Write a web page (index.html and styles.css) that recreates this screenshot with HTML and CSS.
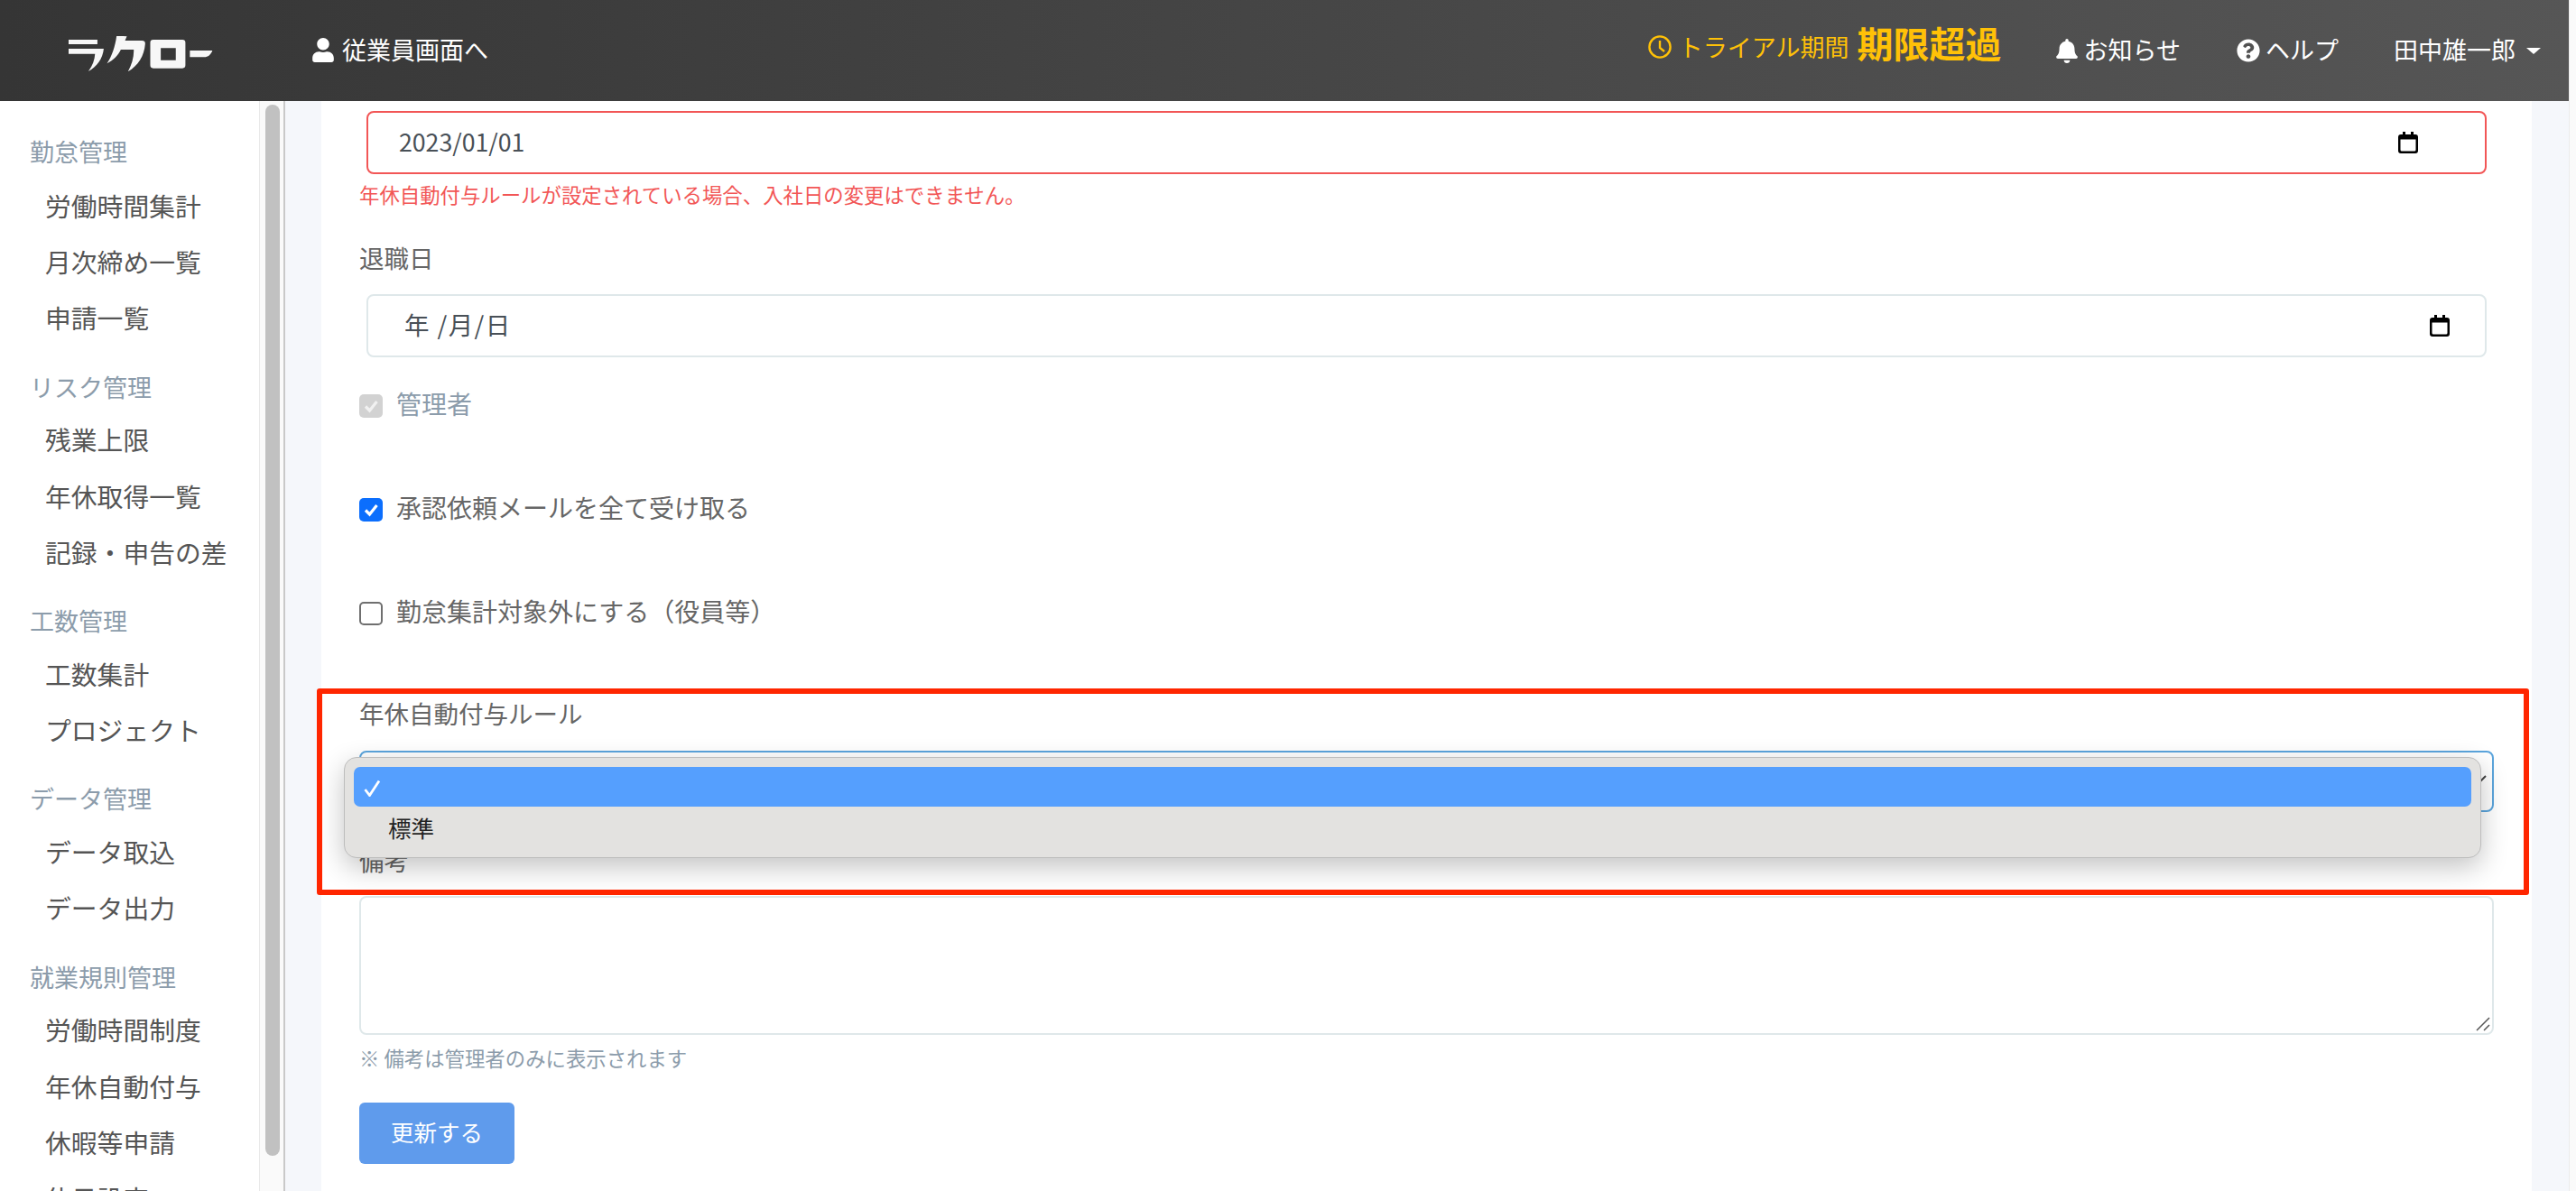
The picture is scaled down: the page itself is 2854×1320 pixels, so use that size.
FILE: index.html
```html
<!DOCTYPE html>
<html lang="ja">
<head>
<meta charset="utf-8">
<title>ラクロー</title>
<link rel="stylesheet" href="styles.css">
</head>
<body>
<div class="app">
  <header class="topbar">
    <svg class="logo" viewBox="45 30 490 120" role="img" aria-label="ラクロー">
      <path fill="#f7f7f7" d="M48 42H144V57H48ZM48 72H165C162 105 142 132 114 147C128 128 135 108 136 89H48Z"/>
      <path fill="#f7f7f7" d="M208 28L242 31L236 45H292Q304 45 303 56C300 95 280 128 246 148C258 125 266 100 265 75H222C212 95 198 110 176 121C192 98 204 62 208 28Z"/>
      <path fill="#f7f7f7" fill-rule="evenodd" d="M330 42H427Q437 42 437 52V127Q437 137 427 137H330Q320 137 320 127V52Q320 42 330 42ZM355 70V110H405V70Z"/>
      <path fill="#f7f7f7" d="M452 78H527C522 92 512 100 500 100H452Z"/>
    </svg>
    <a class="nav-link employee-link">
      <svg class="icon icon-user" viewBox="0 0 448 512"><path d="M224 256c70.7 0 128-57.3 128-128S294.7 0 224 0 96 57.3 96 128s57.3 128 128 128zm89.6 32h-16.7c-22.2 10.2-46.9 16-72.9 16s-50.6-5.8-72.9-16h-16.7C60.2 288 0 348.2 0 422.4V464c0 26.5 21.5 48 48 48h352c26.5 0 48-21.5 48-48v-41.6c0-74.2-60.2-134.4-134.4-134.4z"/></svg>
      <span>従業員画面へ</span>
    </a>
    <div class="topbar-right">
      <div class="trial">
        <svg class="icon-clock" viewBox="0 0 26 26"><circle cx="13" cy="13" r="11.6" fill="none" stroke="currentColor" stroke-width="2.4"/><polyline points="13,6 13,14 18,18" fill="none" stroke="currentColor" stroke-width="2.4"/></svg>
        <span>トライアル期間</span>
        <strong class="trial-status">期限超過</strong>
      </div>
      <a class="nav-link notice-link">
        <svg class="icon icon-bell" viewBox="0 0 448 512"><path d="M224 512c35.32 0 63.97-28.65 63.97-64H160.03c0 35.35 28.65 64 63.97 64zm215.39-149.71c-19.32-20.76-55.47-51.99-55.47-154.29 0-77.7-54.48-139.9-127.94-155.16V32c0-17.67-14.32-32-31.98-32s-31.98 14.33-31.98 32v20.84C118.56 68.1 64.08 130.3 64.08 208c0 102.3-36.15 133.53-55.47 154.29-6 6.45-8.66 14.16-8.61 21.71.11 16.4 12.98 32 32.1 32h383.8c19.12 0 32-15.6 32.1-32 .05-7.55-2.61-15.27-8.61-21.71z"/></svg>
        <span>お知らせ</span>
      </a>
      <a class="nav-link help-link">
        <svg class="icon icon-help" viewBox="0 0 512 512"><path d="M504 256c0 136.997-111.043 248-248 248S8 392.997 8 256C8 119.083 119.043 8 256 8s248 111.083 248 248zM262.655 90c-54.497 0-89.255 22.957-116.549 63.758-3.536 5.286-2.353 12.415 2.715 16.258l34.699 26.31c5.205 3.947 12.621 3.008 16.665-2.122 17.864-22.658 30.113-35.797 57.303-35.797 20.429 0 45.698 13.148 45.698 32.958 0 14.976-12.363 22.667-32.534 33.976C247.128 238.528 216 254.941 216 296v4c0 6.627 5.373 12 12 12h56c6.627 0 12-5.373 12-12v-1.333c0-28.462 83.186-29.647 83.186-106.667 0-58.002-60.165-102-116.531-102zM256 338c-25.365 0-46 20.635-46 46 0 25.364 20.635 46 46 46s46-20.636 46-46c0-25.365-20.635-46-46-46z"/></svg>
        <span>ヘルプ</span>
      </a>
      <a class="nav-link user-menu">
        <span>田中雄一郎</span>
        <i class="caret"></i>
      </a>
    </div>
  </header>

  <div class="workspace">
    <nav class="sidebar">
      <h2 class="side-heading">勤怠管理</h2>
      <a class="side-item">労働時間集計</a>
      <a class="side-item">月次締め一覧</a>
      <a class="side-item">申請一覧</a>
      <h2 class="side-heading">リスク管理</h2>
      <a class="side-item">残業上限</a>
      <a class="side-item">年休取得一覧</a>
      <a class="side-item">記録・申告の差</a>
      <h2 class="side-heading">工数管理</h2>
      <a class="side-item">工数集計</a>
      <a class="side-item">プロジェクト</a>
      <h2 class="side-heading">データ管理</h2>
      <a class="side-item">データ取込</a>
      <a class="side-item">データ出力</a>
      <h2 class="side-heading">就業規則管理</h2>
      <a class="side-item">労働時間制度</a>
      <a class="side-item">年休自動付与</a>
      <a class="side-item">休暇等申請</a>
      <a class="side-item">休日設定</a>
    </nav>
    <div class="side-scrollbar"><div class="side-thumb"></div></div>

    <main class="content">
      <form class="card">
        <div class="date-input date-error">
          <span class="date-value">2023/01/01</span>
          <svg class="calendar" viewBox="0 0 22 24"><path d="M5 0h3v3h6V0h3v3h2a3 3 0 0 1 3 3v15a3 3 0 0 1-3 3H3a3 3 0 0 1-3-3V6a3 3 0 0 1 3-3h2ZM2.500 8.500V20a1.500 1.500 0 0 0 1.500 1.500h14a1.500 1.500 0 0 0 1.500-1.500V8.500Z" fill-rule="evenodd"/></svg>
        </div>
        <p class="error-text">年休自動付与ルールが設定されている場合、入社日の変更はできません。</p>

        <label class="field-label retire-label">退職日</label>
        <div class="date-input date-empty">
          <span class="date-placeholder">年 /月/日</span>
          <svg class="calendar" viewBox="0 0 22 24"><path d="M5 0h3v3h6V0h3v3h2a3 3 0 0 1 3 3v15a3 3 0 0 1-3 3H3a3 3 0 0 1-3-3V6a3 3 0 0 1 3-3h2ZM2.500 8.500V20a1.500 1.500 0 0 0 1.500 1.500h14a1.500 1.500 0 0 0 1.500-1.500V8.500Z" fill-rule="evenodd"/></svg>
        </div>

        <div class="check-row check-disabled">
          <span class="check check-grey"><svg viewBox="0 0 26 26"><polyline points="7,13.500 11.500,18 19.500,8" fill="none" stroke="#f1f1f1" stroke-width="3.200"/></svg></span>
          <span>管理者</span>
        </div>
        <div class="check-row">
          <span class="check check-on"><svg viewBox="0 0 26 26"><polyline points="7,13.500 11.500,18 19.500,8" fill="none" stroke="#fff" stroke-width="3.200"/></svg></span>
          <span>承認依頼メールを全て受け取る</span>
        </div>
        <div class="check-row">
          <span class="check check-off"></span>
          <span>勤怠集計対象外にする（役員等）</span>
        </div>

        <label class="field-label rule-label">年休自動付与ルール</label>
        <div class="select-box">
          <svg class="chevron" viewBox="0 0 24 14"><polyline points="1,1 12,12 23,1" fill="none" stroke="#444" stroke-width="2"/></svg>
          <div class="select-popup">
            <div class="select-option option-active">
              <svg class="option-check" viewBox="0 0 19 19"><polyline points="1.500,11 6.500,17.500 17,1.500" fill="none" stroke="#fff" stroke-width="2.800"/></svg>
            </div>
            <div class="select-option">標準</div>
          </div>
        </div>

        <label class="field-label memo-label">備考</label>
        <div class="memo-box">
          <svg class="resize-grip" viewBox="0 0 16 16"><path d="M1 15L15 1M9 15L15 9" stroke="#555" stroke-width="1.500" fill="none"/></svg>
        </div>
        <p class="note-text">※ 備考は管理者のみに表示されます</p>
        <button type="button" class="submit">更新する</button>

        <div class="annotation"></div>
      </form>
    </main>
  </div>
</div>
</body>
</html>
```
FILE: styles.css
```css
* { box-sizing: border-box; }
html, body { margin: 0; height: 100%; overflow: hidden; }
body {
  background: #fafafa;
  font-family: "Noto Sans CJK JP", "Noto Sans", sans-serif;
  color: #666;
}
.app { width: 2847px; height: 1320px; display: flex; flex-direction: column; border-right: 1px solid #ececec; }

/* top bar */
.topbar {
  flex: none;
  height: 112px;
  display: flex;
  align-items: center;
  padding: 0 31px 0 75px;
  background: linear-gradient(90deg, #353535, #565656);
  color: #fff;
  font-size: 27px;
  line-height: 40px;
}
.logo { width: 163px; height: 40px; margin-top: 8px; flex: none; }
.nav-link { display: flex; align-items: center; color: #fff; white-space: nowrap; }
.nav-link span { margin-bottom: 3px; }
.icon { fill: #fff; flex: none; }
.employee-link { margin-left: 108px; gap: 9px; }
.icon-user { width: 24px; height: 27px; margin-bottom: 2px; }
.topbar-right { margin-left: auto; display: flex; align-items: center; }
.trial { display: flex; align-items: center; color: #ffc107; margin-bottom: 8px; white-space: nowrap; }
.icon-clock { width: 26px; height: 26px; margin-right: 8px; flex: none; }
.trial-status { font-size: 40px; font-weight: 700; margin-left: 9px; margin-bottom: 10px; line-height: 50px; }
.notice-link { margin-left: 60px; gap: 7px; }
.icon-bell { width: 24px; height: 27px; }
.help-link { margin-left: 62px; gap: 6px; }
.icon-help { width: 26px; height: 26px; }
.user-menu { margin-left: 61px; gap: 12px; }
.caret { width: 0; height: 0; border-left: 8px solid transparent; border-right: 8px solid transparent; border-top: 7px solid #fff; }

/* sidebar */
.workspace { flex: 1; min-height: 0; display: flex; }
.sidebar {
  flex: none;
  width: 288px;
  padding: 27px 0 0 33px;
  background: #fff;
  border-right: 1px solid #e9e9e9;
  overflow: hidden;
}
.side-heading {
  margin: 15px 0 0;
  height: 57.700px;
  padding-top: 3px;
  line-height: 54.700px;
  font-size: 27px;
  font-weight: 400;
  color: #8c9cab;
  white-space: nowrap;
}
.side-heading:first-child { margin-top: 0; padding-top: 0; line-height: 57.700px; }
.side-item {
  display: block;
  height: 62.300px;
  line-height: 62.300px;
  padding-left: 17px;
  font-size: 28.800px;
  color: #555;
  white-space: nowrap;
}
.side-scrollbar {
  flex: none;
  width: 28px;
  padding: 4px 4px 0 6px;
  background: #fafafa;
  border-right: 2px solid #c9c9c9;
}
.side-thumb { height: 1165px; background: #c1c1c1; border-radius: 8px; }

/* content */
.content { flex: 1; min-width: 0; background: #f5f7fb; padding: 0 41px 0 40px; overflow: hidden; }
.card {
  position: relative;
  height: 100%;
  background: #fff;
  padding: 11px 42px 0;
}
.date-input {
  height: 70px;
  margin: 0 8px 0 8px;
  display: flex;
  align-items: center;
  justify-content: space-between;
  background: #fff;
  border: 2px solid #dfe8ea;
  border-radius: 8px;
  font-size: 26.700px;
  color: #495057;
}
.date-value { margin-bottom: 4px; }
.date-error { border-color: #f25656; padding: 0 74px 0 34px; }
.date-empty { margin-top: 20px; padding: 0 39px 0 40px; }
.date-placeholder { margin-bottom: 5px; letter-spacing: 1.400px; font-size: 27.500px; }
.calendar { width: 22px; height: 24px; fill: #000; flex: none; }
.error-text { margin: 5px 0 0; font-size: 22.400px; line-height: 34px; color: #f25656; }
.field-label { display: block; font-size: 27.500px; line-height: 42px; color: #666; }
.retire-label { margin-top: 32px; }
.check-row { display: flex; align-items: center; gap: 15px; height: 42px; font-size: 28px; color: #666; }
.check-row + .check-row { margin-top: 73px; }
.date-input + .check-row { margin-top: 30px; }
.check-disabled { color: #8c9cab; }
.check { width: 26px; height: 26px; flex: none; border-radius: 5px; margin-top: 6px; }
.check svg { display: block; width: 26px; height: 26px; }
.check-grey { background: #d2d2d2; }
.check-on { background: #0b6efd; }
.check-off { background: #fff; border: 2px solid #6f6f6f; }
.rule-label { margin-top: 71px; }
.select-box {
  position: relative;
  height: 68px;
  margin-top: 21px;
  border: 2px solid #5ba5dd;
  border-radius: 8px;
  display: flex;
  align-items: center;
  justify-content: flex-end;
  padding-right: 6px;
}
.chevron { width: 24px; height: 14px; }
.select-popup {
  position: absolute;
  left: -19px;
  right: 12px;
  top: 5px;
  height: 112px;
  padding: 10px;
  background: #e3e2e0;
  border: 1px solid #bdbdbd;
  border-radius: 14px;
  box-shadow: 0 10px 30px rgba(0, 0, 0, .24);
  z-index: 2;
}
.select-option {
  height: 44px;
  padding-left: 38px;
  font-size: 25.500px;
  line-height: 46px;
  color: #222;
  border-radius: 7px;
}
.option-active { position: relative; background: #559ffe; }
.option-check { position: absolute; left: 11px; top: 14px; width: 19px; height: 19px; }
.memo-label { margin-top: 32px; }
.memo-box {
  position: relative;
  height: 154px;
  margin-top: 19px;
  border: 2px solid #dfe8ea;
  border-radius: 8px;
  background: #fff;
}
.resize-grip { position: absolute; right: 2px; bottom: 2px; width: 16px; height: 16px; }
.note-text { margin: 8px 0 0; font-size: 22.400px; line-height: 34px; color: #8c9cab; }
.submit {
  display: block;
  width: 172px;
  height: 68px;
  margin-top: 33px;
  padding: 0 0 5px;
  border: 0;
  border-radius: 6px;
  background: #5f9bec;
  color: #fff;
  font: inherit;
  font-size: 25.500px;
}
.annotation {
  position: absolute;
  left: -5px;
  top: 651px;
  width: 2451px;
  height: 229px;
  border: 6px solid #ff2600;
  border-radius: 3px;
  pointer-events: none;
  z-index: 3;
}
```
